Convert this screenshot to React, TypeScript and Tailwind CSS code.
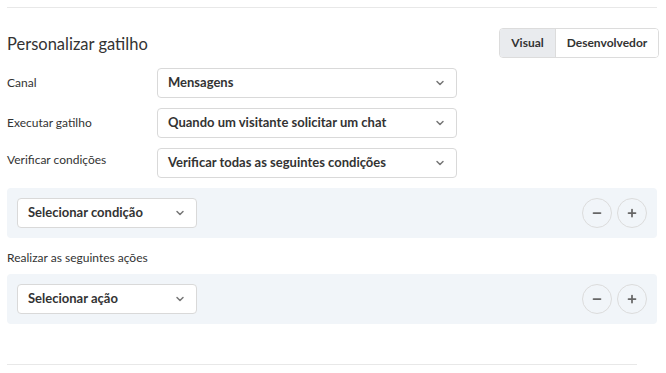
import { ChevronDown, Minus, Plus } from "lucide-react";

const font = { fontFamily: 'Lato, "Noto Sans", sans-serif' };

function Select({ label, className }: { label: string; className: string }) {
  return (
    <div
      className={`flex h-[30px] items-center justify-between rounded border border-[#d9d9d9] bg-white pl-[10px] pr-[10px] ${className}`}
    >
      <span className="text-[13px] font-bold text-[#333]">{label}</span>
      <ChevronDown className="h-[12px] w-[12px] text-[#777]" strokeWidth={3} />
    </div>
  );
}

function CircleButtons() {
  return (
    <div className="flex gap-[5px]">
      <button className="flex h-[30px] w-[30px] items-center justify-center rounded-full border border-[#dcdcdc] bg-transparent">
        <Minus className="h-[12px] w-[12px] text-[#666]" strokeWidth={3.5} />
      </button>
      <button className="flex h-[30px] w-[30px] items-center justify-center rounded-full border border-[#dcdcdc] bg-transparent">
        <Plus className="h-[12px] w-[12px] text-[#666]" strokeWidth={3.5} />
      </button>
    </div>
  );
}

export default function App() {
  return (
    <div className="h-[373px] w-[666px] bg-white px-[7px] pt-[7px] text-[#333]" style={font}>
      <div className="w-[650px] border-t border-[#e8e8e8]" />

      <div className="mt-[20px] flex h-[30px] items-center justify-between">
        <h2 className="pt-[3px] text-[16.5px] font-normal text-[#333]">Personalizar gatilho</h2>
        <div className="flex h-[30px] overflow-hidden rounded border border-[#dcdcdc] text-[12px] font-bold text-[#333]">
          <div className="flex w-[56px] items-center justify-center border-r border-[#dcdcdc] bg-[#e9ebee]">Visual</div>
          <div className="flex w-[102px] items-center justify-center bg-white">Desenvolvedor</div>
        </div>
      </div>

      <div className="mt-[10px] flex flex-col gap-[10px]">
        <div className="flex items-center">
          <span className="w-[150px] text-[12px]">Canal</span>
          <Select label="Mensagens" className="w-[300px]" />
        </div>
        <div className="flex items-center">
          <span className="w-[150px] text-[12px]">Executar gatilho</span>
          <Select label="Quando um visitante solicitar um chat" className="w-[300px]" />
        </div>
        <div className="flex items-start">
          <span className="w-[150px] pt-[3px] text-[12px]">Verificar condições</span>
          <Select label="Verificar todas as seguintes condições" className="w-[300px]" />
        </div>
      </div>

      <div className="mt-[10px] flex h-[50px] w-[650px] items-center justify-between rounded bg-[#f1f5f9] px-[10px]">
        <Select label="Selecionar condição" className="w-[180px]" />
        <CircleButtons />
      </div>

      <div className="mt-[11px] h-[25px] text-[12px]">Realizar as seguintes ações</div>

      <div className="flex h-[50px] w-[650px] items-center justify-between rounded bg-[#f1f5f9] px-[10px]">
        <Select label="Selecionar ação" className="w-[180px]" />
        <CircleButtons />
      </div>

      <div className="mt-[40px] w-[630px] border-t border-[#e8e8e8]" />
    </div>
  );
}
